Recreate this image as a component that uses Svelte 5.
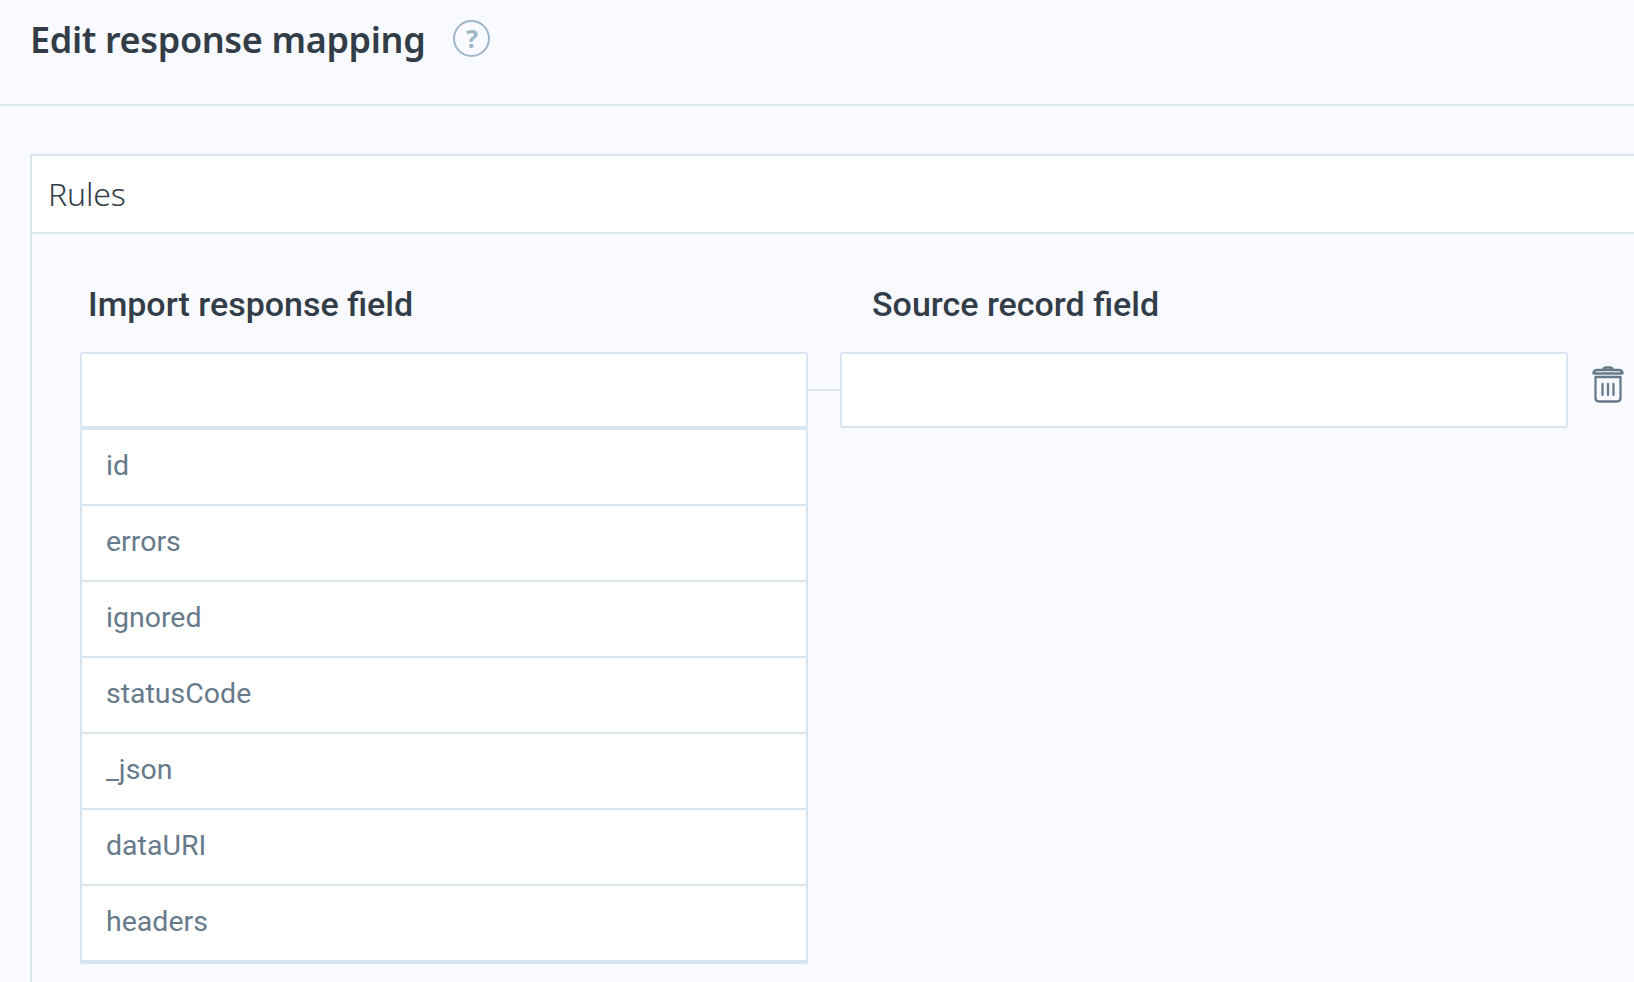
<script>
  const fields = ['id', 'errors', 'ignored', 'statusCode', '_json', 'dataURI', 'headers'];
</script>

<div class="page">
  <header class="top">
    <h1>Edit response mapping</h1>
    <span class="help">?</span>
  </header>

  <section class="card">
    <div class="card-title">Rules</div>
    <div class="card-body">
      <div class="labels">
        <div class="label">Import response field</div>
        <div class="label second">Source record field</div>
      </div>
      <div class="row">
        <div class="col">
          <div class="input"></div>
          <ul class="list">
            {#each fields as f}
              <li>{f}</li>
            {/each}
          </ul>
        </div>
        <div class="link"></div>
        <div class="input right"></div>
        <button class="trash" aria-label="Delete">
          <svg width="32" height="40" viewBox="0 0 32 40" fill="none" stroke="#677a8b" stroke-width="2.3" stroke-linecap="round" stroke-linejoin="round">
            <path d="M1.500 9.500c0-2.500 1.500-3.500 4-3.500h21c2.500 0 4 1 4 3.500z" />
            <path d="M11 6c.5-2 1.500-2.500 3-2.500h4c1.500 0 2.500.5 3 2.500" />
            <path d="M3.500 13v21c0 2 1.500 3.500 3.500 3.500h18c2 0 3.500-1.500 3.500-3.500V13z" />
            <path d="M10.500 20v11M16 20v11M21.500 20v11" />
          </svg>
        </button>
      </div>
    </div>
  </section>
</div>

<style>
  :global(body) {
    margin: 0;
    background: #f8faff;
  }

  .page {
    height: 100vh;
    overflow: hidden;
    background: #f8faff;
    color: #333d47;
  }

  .top {
    display: flex;
    align-items: flex-start;
    height: 104px;
    padding-left: 30px;
    border-bottom: 2px solid #d9e5ee;
  }

  h1 {
    margin: 18px 0 0;
    font: 600 36px/44px "Noto Sans", sans-serif;
    letter-spacing: -0.35px;
  }

  .help {
    display: flex;
    align-items: center;
    justify-content: center;
    box-sizing: border-box;
    width: 37px;
    height: 37px;
    margin: 20px 0 0 28px;
    padding-bottom: 2px;
    border: 2px solid #9db6c9;
    border-radius: 50%;
    color: #9db6c9;
    font: 700 25px "Noto Sans", sans-serif;
  }

  .card {
    width: 1700px;
    height: 900px;
    margin: 48px 0 0 30px;
    border: 2px solid #d9e5ee;
    border-bottom: 0;
  }

  .card-title {
    box-sizing: border-box;
    height: 78px;
    padding: 16px 0 0 16px;
    background: #fff;
    border-bottom: 2px solid #d9e5ee;
    font: 300 32px/44px "Noto Sans", sans-serif;
    letter-spacing: -0.15px;
  }

  .card-body {
    padding: 48px 0 0 48px;
  }

  .labels {
    display: flex;
    height: 70px;
    padding-left: 8px;
  }

  .label {
    width: 784px;
    font: 500 34px/44px Roboto, sans-serif;
  }

  .row {
    display: flex;
    align-items: flex-start;
  }

  .col {
    width: 728px;
  }

  .input {
    box-sizing: border-box;
    height: 76px;
    background: #fff;
    border: 2px solid #d9e5ee;
    border-radius: 3px;
  }

  .input.right {
    width: 728px;
  }

  .link {
    width: 32px;
    height: 2px;
    margin-top: 37px;
    background: #d9e5ee;
  }

  .list {
    margin: 0;
    padding: 0;
    list-style: none;
    background: #fff;
    border: 2px solid #d9e5ee;
    border-top: 0;
    border-bottom-width: 4px;
    border-radius: 0 0 3px 3px;
  }

  li {
    box-sizing: border-box;
    height: 76px;
    padding-left: 24px;
    border-top: 2px solid #d9e5ee;
    color: #677a8b;
    font: 400 28.5px/71px Roboto, sans-serif;
  }

  .trash {
    margin: 12px 0 0 24px;
    padding: 0;
    background: none;
    border: 0;
  }
</style>
